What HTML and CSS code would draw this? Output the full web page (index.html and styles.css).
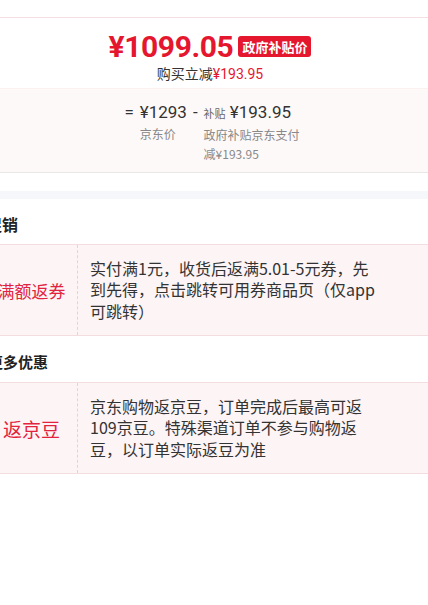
FILE: index.html
```html
<!DOCTYPE html>
<html lang="zh-CN">
<head>
    <meta charset="UTF-8">
    <meta name="viewport" content="width=device-width, initial-scale=1.0">
    <title>政府补贴价</title>
    <link rel="stylesheet" href="styles.css">
</head>
<body>
    <div class="page">
        <div class="top-bar"></div>

        <div class="price-box">
            <div class="price-row">
                <span class="price">¥1099.05</span>
                <span class="badge">政府补贴价</span>
            </div>
            <div class="price-sub">购买立减<span class="red">¥193.95</span></div>
        </div>

        <div class="calc-box">
            <div class="calc">
                <span class="op">=</span>
                <div class="calc-item">
                    <div class="calc-val">¥1293</div>
                    <div class="calc-label">京东价</div>
                </div>
                <span class="op">-</span>
                <div class="calc-item">
                    <div class="calc-val"><small>补贴</small> ¥193.95</div>
                    <div class="calc-label wide">政府补贴京东支付减¥193.95</div>
                </div>
            </div>
        </div>

        <div class="gap"></div>

        <div class="section">
            <h3 class="section-title">促销</h3>
            <div class="promo-row">
                <div class="promo-name">满额返券</div>
                <div class="promo-text">实付满1元，收货后返满5.01-5元券，先到先得，点击跳转可用券商品页（仅app可跳转）</div>
            </div>
        </div>

        <div class="section">
            <h3 class="section-title more">更多优惠</h3>
            <div class="promo-row">
                <div class="promo-name big">返京豆</div>
                <div class="promo-text">京东购物返京豆，订单完成后最高可返109京豆。特殊渠道订单不参与购物返豆，以订单实际返豆为准</div>
            </div>
        </div>
    </div>
</body>
</html>
```

FILE: styles.css
```css
body {
    margin: 0;
    overflow: hidden;
    background-color: #fff;
    color: #333;
    font-family: "Noto Sans CJK SC", sans-serif;
}
.page {
    width: 448px;
    margin-left: -14px;
}
.top-bar {
    height: 17px;
    border-bottom: 1px solid #f6dfe3;
}
.price-box {
    padding: 10px 0 4px;
    text-align: center;
}
.price-row {
    display: flex;
    justify-content: center;
    align-items: center;
    height: 36px;
}
.price {
    font-family: Roboto, sans-serif;
    font-weight: 700;
    font-size: 30px;
    color: #e5172f;
    letter-spacing: -0.4px;
}
.badge {
    margin-left: 5px;
    padding: 0 4px;
    height: 21px;
    line-height: 21px;
    font-size: 13px;
    font-weight: 700;
    color: #fff;
    background-color: #e5172f;
    border-radius: 3px;
}
.price-sub {
    margin-top: -1px;
    font-size: 14px;
    line-height: 20px;
}
.red {
    font-family: Roboto, "Noto Sans CJK SC", sans-serif;
    color: #e5172f;
}
.calc-box {
    padding: 11px 0 9px;
    background-color: #fdf9f8;
    border-top: 1px solid #fbf1f0;
    border-bottom: 1px solid #e9e6e6;
}
.calc {
    display: flex;
    justify-content: center;
    align-items: flex-start;
}
.op {
    font-family: Roboto, sans-serif;
    font-size: 17px;
    line-height: 24px;
    margin: 0 6px;
    color: #333;
}
.calc-val {
    font-family: Roboto, "Noto Sans CJK SC", sans-serif;
    font-size: 17px;
    line-height: 24px;
    color: #333;
    white-space: nowrap;
}
.calc-val small {
    font-family: "Noto Sans CJK SC", sans-serif;
    font-size: 11px;
    color: #666;
}
.calc-label {
    font-size: 12px;
    line-height: 19px;
    color: #888;
}
.calc-label.wide {
    width: 98px;
}
.gap {
    height: 18px;
    border-bottom: 8px solid #f5f7fa;
}
.section-title {
    margin: 0;
    padding: 15px 0 10px;
    font-size: 16px;
    line-height: 20px;
    font-weight: 700;
    color: #222;
}
.section-title.more {
    padding: 16px 0 10px 2px;
    font-size: 15px;
}
.promo-row {
    display: flex;
    align-items: center;
    height: 90px;
    background-color: #fdf4f5;
    border-top: 1px solid #f3dde1;
    border-bottom: 1px solid #f3dde1;
}
.promo-name {
    width: 91px;
    flex-shrink: 0;
    align-self: stretch;
    display: flex;
    align-items: center;
    justify-content: center;
    font-size: 17px;
    color: #e2233f;
    border-right: 1px dashed #f0cdd3;
}
.promo-name.big {
    font-size: 19px;
}
.promo-text {
    width: 288px;
    margin-left: 12px;
    font-size: 16px;
    line-height: 21.5px;
    color: #333;
}
```
